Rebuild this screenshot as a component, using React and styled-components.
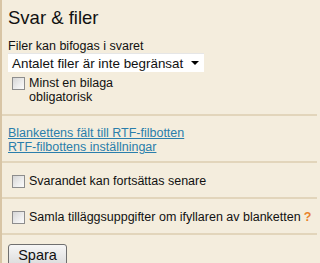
import React from 'react';
import styled, { createGlobalStyle } from 'styled-components';

const GlobalStyle = createGlobalStyle`
  html, body {
    margin: 0;
    padding: 0;
    background: #f4eddd;
  }
  body {
    font-family: "Liberation Sans", Arial, sans-serif;
    color: #111;
  }
`;

const Panel = styled.div`
  width: 317px;
  height: 263px;
  overflow: hidden;
  box-sizing: border-box;
  border-left: 2px solid #d8c5a5;
  background: #f4eddd;
`;

const Section = styled.div`
  padding: 0 6px;
  border-bottom: ${(props) => (props.last ? 'none' : '2px solid #e2d5bb')};
  height: ${(props) => (props.h ? props.h + 'px' : 'auto')};
  box-sizing: border-box;
`;

const Title = styled.h2`
  margin: 0;
  font-size: 18.5px;
  font-weight: normal;
  line-height: 22px;
  padding-top: 7px;
`;

const Label = styled.div`
  font-size: 12.5px;
  line-height: 14px;
  margin-top: 10px;
`;

const Select = styled.div`
  width: 196px;
  height: 19px;
  background: #fff;
  border-top: 1px solid #e6e6e6;
  display: flex;
  align-items: center;
  justify-content: space-between;
  padding: 0 4px;
  box-sizing: border-box;
  font-size: 13.4px;
`;

const Caret = styled.span`
  width: 0;
  height: 0;
  border-left: 4px solid transparent;
  border-right: 4px solid transparent;
  border-top: 4px solid #000;
  margin-right: 1px;
`;

const CheckRow = styled.label`
  display: flex;
  align-items: ${(props) => (props.top ? 'flex-start' : 'center')};
  gap: 4px;
  font-size: 12.5px;
  line-height: 14px;
  white-space: nowrap;
  padding-top: ${(props) => props.mt || 0}px;
  padding-left: 4px;
`;

const Box = styled.span`
  flex: none;
  width: 11px;
  height: 11px;
  border: 1px solid #8d8d8d;
  background: linear-gradient(135deg, #d6d6d6 0%, #eeeeee 60%, #fbfbfb 100%);
  margin-top: ${(props) => props.mt || 0}px;
`;

const Help = styled.span`
  color: #e8832d;
  font-weight: bold;
  margin-left: 3px;
`;

const Links = styled.div`
  padding-top: 10px;
`;

const Link = styled.a`
  display: block;
  color: #2a7eab;
  text-decoration: underline;
  font-size: 12.5px;
  line-height: 14px;
`;

const Button = styled.button`
  margin-top: 9px;
  width: 59px;
  height: 22px;
  border: 1px solid #6f6f6f;
  border-radius: 3px;
  background: linear-gradient(#f6f6f6, #dcdcdc);
  font-family: "Liberation Sans", Arial, sans-serif;
  font-size: 14.5px;
  line-height: 18px;
  color: #111;
  padding: 0;
`;

export default function App() {
  return (
    <>
      <GlobalStyle />
      <Panel>
        <Section h={116}>
          <Title>Svar &amp; filer</Title>
          <Label>Filer kan bifogas i svaret</Label>
          <Select>
            <span>Antalet filer är inte begränsat</span>
            <Caret />
          </Select>
          <CheckRow top mt={4}>
            <Box mt={1} />
            <span>
              Minst en bilaga
              <br />
              obligatorisk
            </span>
          </CheckRow>
        </Section>
        <Section h={47}>
          <Links>
            <Link href="#">Blankettens fält till RTF-filbotten</Link>
            <Link href="#">RTF-filbottens inställningar</Link>
          </Links>
        </Section>
        <Section h={36}>
          <CheckRow mt={11}>
            <Box />
            <span>Svarandet kan fortsättas senare</span>
          </CheckRow>
        </Section>
        <Section h={36}>
          <CheckRow mt={11}>
            <Box />
            <span>
              Samla tilläggsuppgifter om ifyllaren av blanketten
              <Help>?</Help>
            </span>
          </CheckRow>
        </Section>
        <Section last>
          <Button>Spara</Button>
        </Section>
      </Panel>
    </>
  );
}
